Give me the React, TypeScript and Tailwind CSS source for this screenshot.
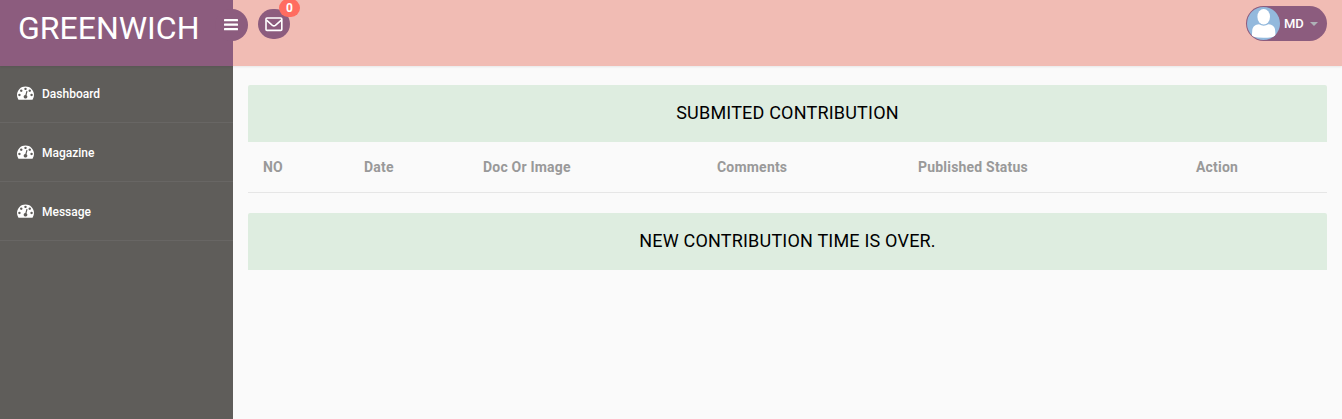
const items = ["Dashboard", "Magazine", "Message"];

const columns = [
  { label: "NO", width: "w-[101px]" },
  { label: "Date", width: "w-[119px]" },
  { label: "Doc Or Image", width: "w-[234px]" },
  { label: "Comments", width: "w-[201px]" },
  { label: "Published Status", width: "w-[278px]" },
  { label: "Action", width: "w-[146px]" },
];

function Gauge() {
  return (
    <svg viewBox="0 0 1792 1792" className="mb-[3px] size-[17px] shrink-0" fill="currentColor">
      <path d="M384 1152q0-53-37.5-90.5t-90.5-37.5-90.5 37.5-37.5 90.5 37.5 90.5 90.5 37.5 90.5-37.5 37.5-90.5zm192-448q0-53-37.5-90.5t-90.5-37.5-90.5 37.5-37.5 90.5 37.5 90.5 90.5 37.5 90.5-37.5 37.5-90.5zm428 481l101-382q6-26-7.5-48.5t-38.5-29.5-48 6.5-30 39.5l-101 382q-60 5-107 43.5t-63 98.5q-20 77 20 146t117 89 146-20 89-117q16-60-6-117t-72-91zm660-33q0-53-37.5-90.5t-90.5-37.5-90.5 37.5-37.5 90.5 37.5 90.5 90.5 37.5 90.5-37.5 37.5-90.5zm-640-640q0-53-37.5-90.5t-90.5-37.5-90.5 37.5-37.5 90.5 37.5 90.5 90.5 37.5 90.5-37.5 37.5-90.5zm448 192q0-53-37.5-90.5t-90.5-37.5-90.5 37.5-37.5 90.5 37.5 90.5 90.5 37.5 90.5-37.5 37.5-90.5zm320 448q0 261-141 483-19 29-54 29h-1402q-35 0-54-29-141-221-141-483 0-182 71-348t191-286 286-191 348-71 348 71 286 191 191 286 71 348z" />
    </svg>
  );
}

function Envelope() {
  return (
    <svg viewBox="0 0 18 15" className="h-[15px] w-[18px]" fill="none" stroke="currentColor" strokeWidth="1.6" strokeLinejoin="round">
      <rect x="1" y="1" width="15.8" height="12.4" rx="1" />
      <path d="M1.5 3.2L7.4 8.3Q8.9 9.4 10.4 8.3L16.3 3.2" />
    </svg>
  );
}

function Lines() {
  return (
    <svg viewBox="0 0 14 12" className="mr-px h-3 w-3.5" fill="currentColor">
      <rect y="0" width="14" height="2.3" rx=".5" />
      <rect y="4.5" width="14" height="2.3" rx=".5" />
      <rect y="9" width="14" height="2.3" rx=".5" />
    </svg>
  );
}

function Avatar() {
  return (
    <svg viewBox="0 0 33 33" className="size-[33px] rounded-full">
      <rect width="33" height="33" fill="#93b9dd" />
      <ellipse cx="16.7" cy="9.7" rx="6.3" ry="7.7" fill="#fff" />
      <path
        fill="#fff"
        d="M12 17.3Q16.7 20 21.4 17.3C25 17.6 28 19.3 28.2 24L28.6 29.6Q22 30.8 16.5 30.8T4.8 29.600L5.200 24C5.500 19.300 8.500 17.600 12 17.300z"
      />
    </svg>
  );
}

function Banner({ children }: { children: string }) {
  return (
    <h2 className="flex h-[57px] items-center justify-center rounded-t-[2px] bg-[#deede0] pb-[2px] text-[18px] font-normal tracking-[0.2px] text-black">
      {children}
    </h2>
  );
}

export default function App() {
  return (
    <div className="flex h-[419px] flex-col overflow-hidden bg-[#fafafa] font-[Roboto,sans-serif]">
      <header className="relative z-10 flex h-[66px] shrink-0 bg-[#f1bcb4] text-white shadow-[0_1px_2px_rgba(0,0,0,0.08)]">
        <div className="relative w-[233px] shrink-0 bg-[#8c5c7e] pt-[7px] pl-[18px]">
          <span className="block text-[32px] leading-[42px]">GREENWICH</span>
          <button className="absolute top-[9px] left-[215px] flex h-8 w-[33px] items-center justify-center rounded-full bg-[#8c5c7e]">
            <Lines />
          </button>
        </div>
        <button className="relative mt-[9px] ml-[25px] flex h-[30px] w-8 items-center justify-center rounded-full bg-[#8c5c7e]">
          <Envelope />
          <span className="absolute -top-[10px] left-[21px] flex h-[18px] w-[21px] items-center justify-center rounded-full bg-[#ff6c60] text-[12px] font-bold">
            0
          </span>
        </button>
        <button className="mt-[6px] mr-[15px] ml-auto flex h-[35px] w-[81px] items-center rounded-full bg-[#8c5c7e] pl-px">
          <Avatar />
          <span className="ml-1 text-[13px] font-medium">MD</span>
          <svg viewBox="0 0 8 4" className="ml-1.5 h-1 w-2" fill="#aeb2b7">
            <path d="M0 0h8L4 4z" />
          </svg>
        </button>
      </header>
      <div className="flex flex-1">
        <nav className="w-[233px] shrink-0 bg-[#5f5d5a] text-white">
          {items.map((item, i) => (
            <a
              key={item}
              className={
                i === 0
                  ? "flex h-[57px] items-center gap-2 border-b border-[#686664] pl-[17px] text-[12px] font-medium"
                  : "flex h-[59px] items-center gap-2 border-b border-[#686664] pt-px pl-[17px] text-[12px] font-medium"
              }
            >
              <Gauge />
              <span>{item}</span>
            </a>
          ))}
        </nav>
        <main className="flex-1 px-[15px] pt-[19px]">
          <Banner>SUBMITED CONTRIBUTION</Banner>
          <div className="mb-5 h-[51px] border-b border-[#e6e6e6]">
            <table className="h-[50px] w-full table-fixed text-left text-[14px] tracking-[0.2px] text-[#999999]">
              <thead>
                <tr>
                  {columns.map((c) => (
                    <th key={c.label} className={`${c.width} pl-[15px] font-bold`}>
                      {c.label}
                    </th>
                  ))}
                </tr>
              </thead>
            </table>
          </div>
          <Banner>NEW CONTRIBUTION TIME IS OVER.</Banner>
        </main>
      </div>
    </div>
  );
}
